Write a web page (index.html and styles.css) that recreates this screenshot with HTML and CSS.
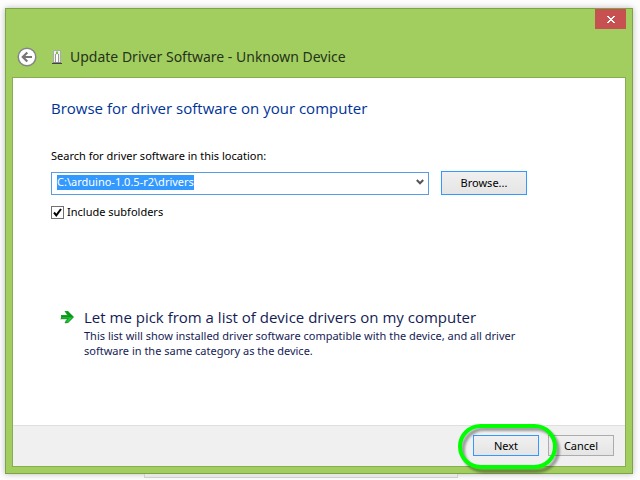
FILE: index.html
```html
<!DOCTYPE html>
<html lang="en">
<head>
<meta charset="utf-8">
<title>Update Driver Software</title>
<link rel="stylesheet" href="styles.css">
</head>
<body>
<main class="window">
  <button class="close" type="button" aria-label="Close">
    <svg width="8" height="7" viewBox="0 0 8 7" shape-rendering="crispEdges"><path d="M0 0h2v1h1v1h2V1h1V0h2v1H7v1H6v1H5v1h1v1h1v1h1v1H6V6H5V5H3v1H2v1H0V6h1V5h1V4h1V3H2V2H1V1H0z" fill="#fff"/></svg>
  </button>
  <header class="titlebar">
    <button class="back" type="button" aria-label="Back">
      <svg width="20" height="20" viewBox="0 0 20 20"><circle cx="10" cy="10" r="8.8" fill="#fff" stroke="#858585" stroke-width="1.5"/><path d="M15 10H6M10.300 5.500 5.800 10l4.500 4.500" fill="none" stroke="#777" stroke-width="2.200"/></svg>
    </button>
    <svg class="device" width="10" height="15" viewBox="0 0 10 15"><path d="M1.5.5h7v12h-7z" fill="#eee" stroke="#aaa"/><path d="M3.5 4v8M6.5 4v8" stroke="#999"/><path d="M4 5h2v7H4z" fill="#fff"/><path d="M4 1.500h2v2.500H4z" fill="#72c832"/><path d="M1 12h8v1H1z" fill="#888"/><path d="M0 13h10v1H0z" fill="#444"/></svg>
    <h1 class="title">Update Driver Software - Unknown Device</h1>
  </header>
  <form class="panel">
    <div class="content">
      <h2 class="heading">Browse for driver software on your computer</h2>
      <label class="label" for="path">Search for driver software in this location:</label>
      <div class="row">
        <div class="combo">
          <input class="path" id="path" type="text" value="C:\arduino-1.0.5-r2\drivers" spellcheck="false">
          <button class="drop" type="button" aria-label="Show locations"><svg width="8" height="6" viewBox="0 0 8 6"><path d="M.8 1 4 4.3 7.2 1" fill="none" stroke="#555" stroke-width="2"/></svg></button>
        </div>
        <button class="button browse" type="button">Browse...</button>
      </div>
      <div class="check">
        <span class="tick"><input class="box" id="subfolders" type="checkbox" checked><svg class="mark" width="13" height="13" viewBox="0 0 13 13"><path d="M3 6.500 5.300 9.300 10 3" fill="none" stroke="#000" stroke-width="2"/></svg></span>
        <label for="subfolders">Include subfolders</label>
      </div>
      <button class="command" type="button">
        <svg class="arrow" width="16" height="14" viewBox="0 0 16 14"><path d="M1 9h6v4l6-5" fill="none" stroke="#ddd" stroke-width="2"/><path d="M2 5h6L5.500 1H9l6 6-6 6H5.500L8 9H2z" fill="#14a424"/><path d="M3 6h7L7.500 2H9l5 5H3z" fill="#0b9417"/><path d="M3 7.500h10L9 12H7.500L10 8H3z" fill="#20c93a"/></svg>
        <span class="command-text"><span class="command-title">Let me pick from a list of device drivers on my computer</span>
        <span class="note">This list will show installed driver software compatible with the device, and all driver software in the same category as the device.</span></span>
      </button>
    </div>
    <footer class="footer">
      <span class="marked"><button class="button next" type="button">Next</button>
        <svg class="ring" width="108" height="54" viewBox="0 0 108 54"><rect x="7" y="8" width="95" height="42" rx="21" fill="none" stroke="#000" stroke-opacity=".35" stroke-width="4" class="ring-shadow"/><rect x="4" y="5" width="95" height="41" rx="20.500" fill="none" stroke="#0f0" stroke-width="4"/></svg>
      </span>
      <button class="button cancel" type="button">Cancel</button>
    </footer>
  </form>
</main>
<div class="behind"></div>
<script src="script.js"></script>
</body>
</html>
```
FILE: styles.css
```css
* { box-sizing: border-box; }
body {
  margin: 0;
  padding: 8px 7px 2px 5px;
  min-height: 100vh;
  display: flex;
  flex-direction: column;
  background: #fdfdfd;
  color: #000;
  font: 11px/16px "Noto Sans", "Open Sans", sans-serif;
}
button { font: inherit; color: inherit; padding: 0; border: 0; background: none; }
.window {
  flex: 1;
  display: flex;
  flex-direction: column;
  padding: 0 6px 6px;
  border: 1px solid #7da348;
  background: #a2ce60;
  box-shadow: 0 0 6px #bbb;
}
.close {
  align-self: flex-end;
  display: flex;
  align-items: center;
  justify-content: center;
  width: 31px;
  height: 20px;
  background: #c75050;
}
.titlebar {
  display: flex;
  align-items: center;
  height: 48px;
  padding: 8px 5px 0;
}
.back { display: flex; }
.device { margin: 0 8px 0 15px; }
.title { margin: 0; font-size: 14px; line-height: 20px; font-weight: 400; color: #26331a; }
.panel {
  flex: 1;
  display: flex;
  flex-direction: column;
  border: 1px solid #87ad50;
  background: #fff;
}
.content { flex: 1; padding: 19px 38px; }
.heading {
  margin: 0;
  font-family: "Open Sans", "Noto Sans", sans-serif;
  font-size: 15px;
  line-height: 22px;
  font-weight: 400;
  color: #003399;
}
.label { display: block; margin-top: 29px; }
.row { display: flex; align-items: center; gap: 12px; margin-top: 7px; }
.combo {
  flex: 0 1 378px;
  display: flex;
  height: 23px;
  padding: 2px 4px 4px 5px;
  border: 1px solid #569de5;
}
.path {
  flex: 1;
  min-width: 0;
  padding: 0;
  border: 0;
  outline: 0;
  font: inherit;
  color: #000;
}
.path::selection { background: #3399ff; color: #fff; }
.drop { display: flex; align-items: center; }
.button {
  height: 21px;
  border: 1px solid #acacac;
  background: linear-gradient(#f0f0f0, #e5e5e5);
}
.browse { width: 86px; height: 24px; border-color: #3399ff; }
.check { display: flex; align-items: center; gap: 3px; margin-top: 9px; }
.tick { position: relative; display: flex; }
.box {
  appearance: none;
  width: 13px;
  height: 13px;
  margin: 0;
  border: 1px solid #707070;
  background: #fff;
}
.mark { position: absolute; inset: 0; visibility: hidden; pointer-events: none; }
.box:checked + .mark { visibility: visible; }
.command { display: flex; width: 100%; margin-top: 86px; padding-left: 8px; text-align: left; color: #151c55; }
.arrow { flex: none; margin: 4px 9px 0 0; }
.command-text { width: 460px; }
.command-title, .note { display: block; }
.command-title { font-family: "Open Sans", "Noto Sans", sans-serif; font-size: 15px; line-height: 22px; }
.note { line-height: 15px; }
.footer {
  display: flex;
  justify-content: flex-end;
  gap: 9px;
  padding: 9px 11px 10px;
  border-top: 1px solid #dfdfdf;
  background: #f0f0f0;
}
.marked { position: relative; display: flex; }
.ring { position: absolute; left: -17px; top: -14px; pointer-events: none; }
.ring-shadow { filter: blur(1px); }
.next { width: 66px; border-color: #3399ff; }
.cancel { width: 66px; }
.behind {
  width: 50%;
  height: 4px;
  margin-left: 139px;
  border: 1px solid #d0d0d0;
  border-top: 0;
  background: #e8e8e8;
}
```
FILE: script.js
```js
document.getElementById("path").select();
```
